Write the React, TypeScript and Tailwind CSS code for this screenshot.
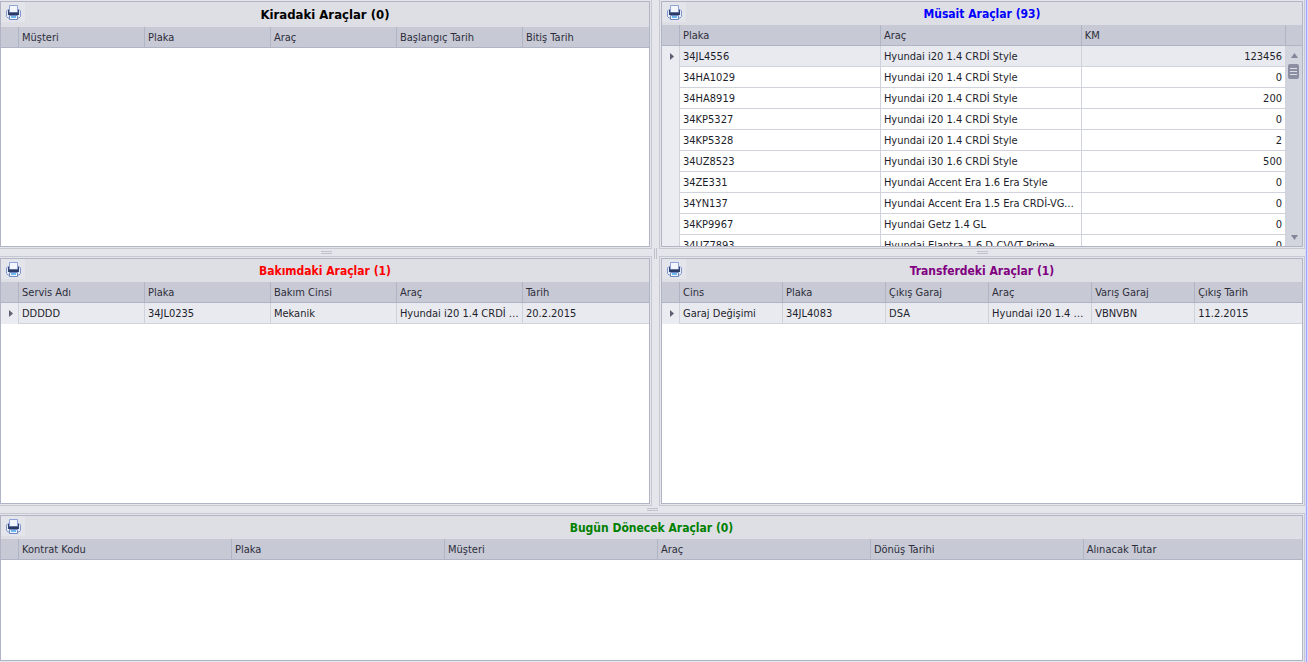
import type { ReactNode } from "react";
import clsx from "clsx";

type GridProps = {
  columns: string[];
  rows?: string[][];
  colClass: string;
  numericLast?: boolean;
};

const availableCars = [
  ["34JL4556", "Hyundai i20 1.4 CRDİ Style", "123456"],
  ["34HA1029", "Hyundai i20 1.4 CRDİ Style", "0"],
  ["34HA8919", "Hyundai i20 1.4 CRDİ Style", "200"],
  ["34KP5327", "Hyundai i20 1.4 CRDİ Style", "0"],
  ["34KP5328", "Hyundai i20 1.4 CRDİ Style", "2"],
  ["34UZ8523", "Hyundai i30 1.6 CRDİ Style", "500"],
  ["34ZE331", "Hyundai Accent Era 1.6 Era Style", "0"],
  ["34YN137", "Hyundai Accent Era 1.5 Era CRDİ-VGT Team", "0"],
  ["34KP9967", "Hyundai Getz 1.4 GL", "0"],
  ["34UZ7893", "Hyundai Elantra 1.6 D-CVVT Prime", "0"],
];

function PrinterIcon() {
  return (
    <svg width="15" height="15" viewBox="0 0 15 15" aria-hidden="true">
      <path d="M2 4.5h11l1.5 1.5v5.5L13 13H2L.5 11.500V6z" fill="#e6ecfa" stroke="#7f95cc" />
      <path d="M2 5h2v3h7V5h2v5H2z" fill="#34446f" />
      <path d="M3.500 .5h8v7h-8z" fill="#f4f6fd" stroke="#8fa3d8" />
      <path d="M3 7.500h9V10H3z" fill="#2a3a63" />
      <path d="M3.500 10.500h8v4h-8z" fill="#f1f5fd" stroke="#6f88c4" />
      <path d="M5 11h5v2H5z" fill="#6db8ea" />
    </svg>
  );
}

function RowArrow() {
  return (
    <svg className="ml-2" width="4" height="7" viewBox="0 0 4 7" aria-hidden="true">
      <path d="M0 0l4 3.5L0 7z" fill="#5d6072" />
    </svg>
  );
}

function DataGrid({ columns, rows = [], colClass, numericLast }: GridProps) {
  return (
    <table className="w-full table-fixed border-separate border-spacing-0 text-left">
      <colgroup>
        <col className="w-[18px]" />
        {columns.map((c, i) => (
          <col key={c} className={i < columns.length - 1 ? colClass : undefined} />
        ))}
      </colgroup>
      <thead>
        <tr className="h-[21px] bg-[#c7c9d5] text-[#2d2e3a]">
          <td className="border-r border-b border-[#b1b4c4]" />
          {columns.map((c) => (
            <th
              key={c}
              className={clsx(
                "truncate border-r border-b border-[#b1b4c4] px-[3px] pt-0.5 pb-0 font-normal",
                !numericLast && "last:border-r-0"
              )}
            >
              {c}
            </th>
          ))}
        </tr>
      </thead>
      <tbody>
        {rows.map((row, r) => (
          <tr key={row[0]} className={clsx("h-[21px] text-[#1d1e2b]", r === 0 && "bg-[#e9eaf0]")}>
            <td className="border-r border-[#d0d2dc] bg-[#ebecf1] p-0">{r === 0 && <RowArrow />}</td>
            {row.map((cell, i) => (
              <td
                key={i}
                className={clsx(
                  "truncate border-r border-b border-[#d0d2dc] px-[3px] pt-0.5 pb-0",
                  !numericLast && "last:border-r-0",
                  numericLast && i === row.length - 1 && "text-right"
                )}
              >
                {cell}
              </td>
            ))}
          </tr>
        ))}
      </tbody>
    </table>
  );
}

function ScrollBar() {
  return (
    <div className="flex w-4 shrink-0 flex-col bg-[#d2d4de]">
      <div className="h-[21px] border-b border-[#b1b4c4] bg-[#c7c9d5]" />
      <button type="button" aria-label="Yukarı kaydır" className="flex h-[18px] items-center justify-center">
        <svg width="7" height="5" viewBox="0 0 7 5">
          <path d="M3.5 0L7 5H0z" fill="#84879a" />
        </svg>
      </button>
      <div className="ml-0.5 flex h-[15px] w-[11px] flex-col items-center justify-center gap-0.5 rounded-xs bg-[#8c8fa1]">
        <span className="h-px w-[7px] bg-[#dcdde5]" />
        <span className="h-px w-[7px] bg-[#dcdde5]" />
        <span className="h-px w-[7px] bg-[#dcdde5]" />
      </div>
      <button type="button" aria-label="Aşağı kaydır" className="mt-auto flex h-[18px] items-center justify-center">
        <svg width="7" height="5" viewBox="0 0 7 5">
          <path d="M0 0h7L3.5 5z" fill="#84879a" />
        </svg>
      </button>
    </div>
  );
}

type PanelProps = {
  title: string;
  titleClass: string;
  frameClass: string;
  tall?: boolean;
  scroll?: boolean;
  children: ReactNode;
};

function Panel({ title, titleClass, frameClass, tall, scroll, children }: PanelProps) {
  return (
    <section className={clsx("flex min-h-0 border-[#c5c7d1]", frameClass)}>
      <div className="flex min-w-0 flex-1 flex-col border border-[#b1b4c4] bg-white">
        <header
          className={clsx(
            "grid shrink-0 grid-cols-[24px_1fr_24px] bg-[#dedfe4]",
            tall ? "h-[25px] text-[13px]" : "h-[23px] text-xs"
          )}
        >
          <button
            type="button"
            aria-label={`Yazdır: ${title}`}
            className="flex h-5 items-center justify-center bg-[#e4e5eb]"
          >
            <PrinterIcon />
          </button>
          <h2 className={clsx("self-center text-center leading-4 font-bold", titleClass)}>{title}</h2>
        </header>
        <div className="flex min-h-0 flex-1 overflow-hidden">
          <div className="min-w-0 flex-1 overflow-hidden">{children}</div>
          {scroll && <ScrollBar />}
        </div>
      </div>
    </section>
  );
}

function Splitter({ vertical }: { vertical?: boolean }) {
  return (
    <div
      role="separator"
      className={clsx(
        "flex shrink-0 items-center justify-center",
        vertical ? "w-[7px] cursor-col-resize" : "h-[7px] cursor-row-resize"
      )}
    >
      <span className={clsx("border-[#bfc1cc]", vertical ? "h-[11px] w-[3px] border-x" : "h-[3px] w-[11px] border-y")} />
    </div>
  );
}

export default function App() {
  return (
    <div className="h-screen border-r border-[#d9d9fb] bg-[#e5e6eb] font-['DejaVu_Sans_Condensed','DejaVu_Sans',sans-serif] text-[11px] leading-4">
      <main className="flex h-full flex-col border-r border-[#a3a3ff]">
        <div className="flex h-full flex-col border-r border-[#dcdcf6]">
          <div className="flex min-h-0 flex-[506]">
            <div className="flex min-w-0 flex-[652] flex-col">
              <Panel title="Kiradaki Araçlar (0)" titleClass="text-black" frameClass="flex-1 border-r border-b pt-px pr-px pb-px" tall>
                <DataGrid columns={["Müşteri", "Plaka", "Araç", "Başlangıç Tarih", "Bitiş Tarih"]} colClass="w-[19.44%]" />
              </Panel>
              <Splitter />
              <Panel title="Bakımdaki Araçlar (1)" titleClass="text-[#ff0000]" frameClass="flex-1 border-y border-r py-px pr-px">
                <DataGrid
                  columns={["Servis Adı", "Plaka", "Bakım Cinsi", "Araç", "Tarih"]}
                  rows={[["DDDDD", "34JL0235", "Mekanik", "Hyundai i20 1.4 CRDİ Style", "20.2.2015"]]}
                  colClass="w-[19.44%]"
                />
              </Panel>
            </div>
            <Splitter vertical />
            <div className="flex min-w-0 flex-[646] flex-col">
              <Panel title="Müsait Araçlar (93)" titleClass="text-[#0000ff]" frameClass="flex-1 border-x border-b p-px" scroll>
                <DataGrid columns={["Plaka", "Araç", "KM"]} rows={availableCars} colClass="w-[32.2%]" numericLast />
              </Panel>
              <Splitter />
              <Panel title="Transferdeki Araçlar (1)" titleClass="text-[#800080]" frameClass="flex-1 border p-px">
                <DataGrid
                  columns={["Cins", "Plaka", "Çıkış Garaj", "Araç", "Varış Garaj", "Çıkış Tarih"]}
                  rows={[["Garaj Değişimi", "34JL4083", "DSA", "Hyundai i20 1.4 CRDİ Style", "VBNVBN", "11.2.2015"]]}
                  colClass="w-[16.1%]"
                />
              </Panel>
            </div>
          </div>
          <Splitter />
          <Panel title="Bugün Dönecek Araçlar (0)" titleClass="text-[#008000]" frameClass="flex-[146] border-t border-r py-px pr-px">
            <DataGrid
              columns={["Kontrat Kodu", "Plaka", "Müşteri", "Araç", "Dönüş Tarihi", "Alınacak Tutar"]}
              colClass="w-[16.37%]"
            />
          </Panel>
        </div>
      </main>
    </div>
  );
}
